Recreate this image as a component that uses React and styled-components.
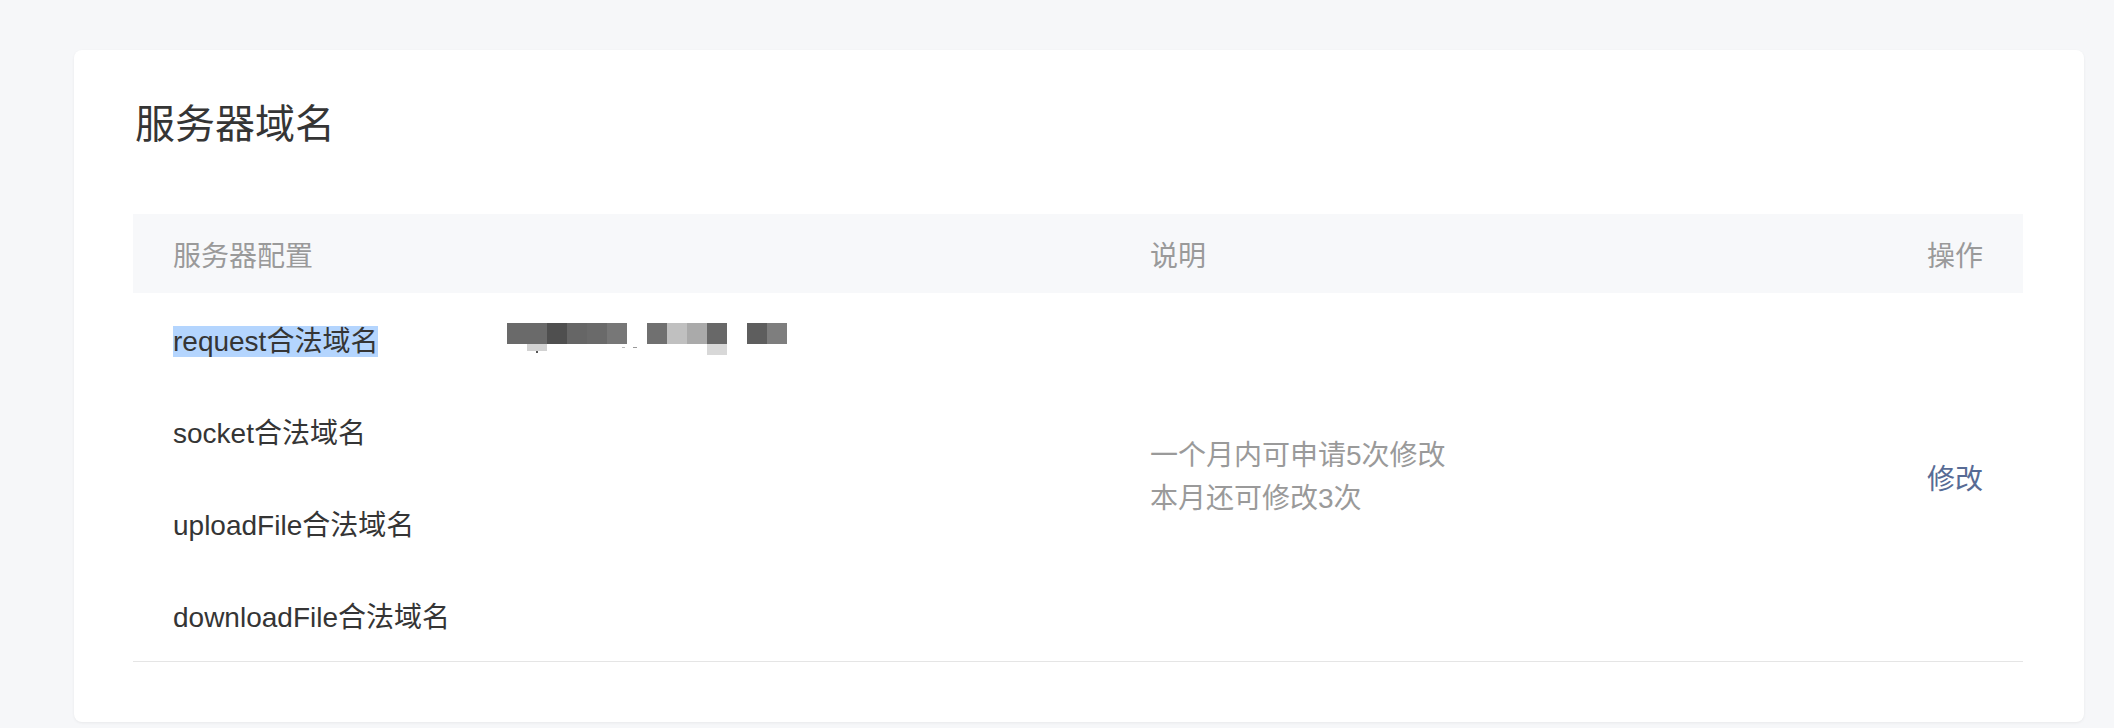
import styled, { createGlobalStyle } from 'styled-components';

const GlobalStyle = createGlobalStyle`
  * {
    margin: 0;
    padding: 0;
    box-sizing: border-box;
  }
  body {
    background-color: #f6f7f9;
    font-family: 'Liberation Sans', 'Noto Sans CJK SC', sans-serif;
    -webkit-font-smoothing: antialiased;
  }
`

const Page = styled.div`
  padding: 50px 30px 4px 74px;
`

const Card = styled.div`
  background-color: #ffffff;
  border-radius: 8px;
  box-shadow: 0 1px 3px rgba(0, 0, 0, 0.06);
  padding: 46px 61px 60px 59px;
`

const Title = styled.h2`
  font-size: 40px;
  font-weight: 400;
  line-height: 56px;
  color: #353535;
  padding-left: 2px;
  margin-bottom: 62px;
`

const Table = styled.table`
  width: 100%;
  border-collapse: collapse;
  table-layout: fixed;
  font-size: 28px;
`

const HeadCell = styled.th`
  height: 79px;
  padding: 0 40px;
  background-color: #f7f8fa;
  color: #9a9a9a;
  font-weight: 400;
  text-align: ${props => props.$align || 'left'};
  width: ${props => props.$width || 'auto'};
`

const Row = styled.tr`
  height: 92px;
  border-bottom: ${props => props.$last ? '1px solid #e5e5e5' : 'none'};
`

const Cell = styled.td`
  padding: 0 40px;
  color: #353535;
  vertical-align: middle;
`

const Label = styled.span`
  display: inline-block;
  width: 334px;
  vertical-align: middle;
`

const Selected = styled.span`
  background-color: #b4d5fe;
`

const Note = styled.td`
  padding: 0 40px;
  color: #9a9a9a;
  line-height: 43px;
  vertical-align: middle;
  border-bottom: 1px solid #e5e5e5;
`

const Action = styled.td`
  padding: 0 40px;
  text-align: right;
  vertical-align: middle;
  border-bottom: 1px solid #e5e5e5;
`

const Link = styled.a`
  color: #576b95;
  text-decoration: none;
  cursor: pointer;
`

const Mosaic = () => (
  <svg width="280" height="32" viewBox="0 0 280 32" style={{ verticalAlign: 'middle' }}>
    {['#6a6a6a', '#6a6a6a', '#4f4f4f', '#666666', '#6a6a6a', '#777777'].map((c, i) => (
      <rect key={'a' + i} x={i * 20} y="0" width="20" height="21" fill={c} />
    ))}
    <rect x="20" y="21" width="20" height="7" fill="#d2d2d2" />
    <rect x="29" y="28" width="2" height="2" fill="#555555" />
    <rect x="115" y="24" width="3" height="1" fill="#bbbbbb" />
    <rect x="126" y="24" width="4" height="1" fill="#999999" />
    {['#707070', '#c0c0c0', '#aaaaaa', '#686868'].map((c, i) => (
      <rect key={'b' + i} x={140 + i * 20} y="0" width="20" height="21" fill={c} />
    ))}
    <rect x="200" y="21" width="20" height="11" fill="#d8d8d8" />
    {['#5e5e5e', '#7e7e7e'].map((c, i) => (
      <rect key={'c' + i} x={240 + i * 20} y="0" width="20" height="21" fill={c} />
    ))}
  </svg>
)

const domains = ['request', 'socket', 'uploadFile', 'downloadFile']

function App() {
  return (
    <>
      <GlobalStyle />
      <Page>
        <Card>
          <Title>服务器域名</Title>
          <Table>
            <thead>
              <tr>
                <HeadCell $width="977px">服务器配置</HeadCell>
                <HeadCell>说明</HeadCell>
                <HeadCell $width="220px" $align="right">操作</HeadCell>
              </tr>
            </thead>
            <tbody>
              {domains.map((name, i) => (
                <Row key={name} $last={i === domains.length - 1}>
                  <Cell>
                    <Label>
                      {i === 0 ? <Selected>{name}合法域名</Selected> : name + '合法域名'}
                    </Label>
                    {i === 0 && <Mosaic />}
                  </Cell>
                  {i === 0 && (
                    <>
                      <Note rowSpan={4}>
                        一个月内可申请5次修改<br />本月还可修改3次
                      </Note>
                      <Action rowSpan={4}>
                        <Link>修改</Link>
                      </Action>
                    </>
                  )}
                </Row>
              ))}
            </tbody>
          </Table>
        </Card>
      </Page>
    </>
  )
}

export default App;
